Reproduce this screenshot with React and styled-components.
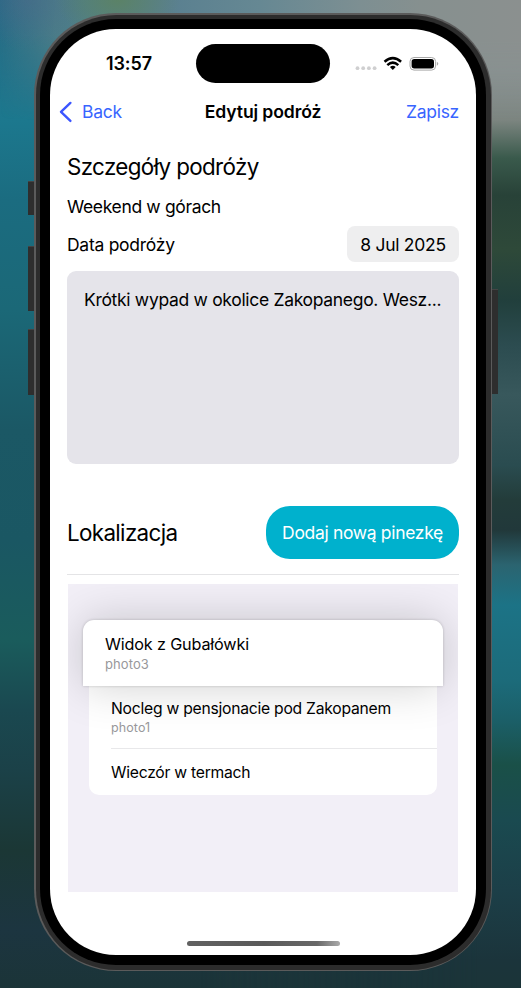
import React from "react";
import styled, { createGlobalStyle } from "styled-components";

const GlobalStyle = createGlobalStyle`
  * { box-sizing: border-box; }
  html, body { margin: 0; padding: 0; overflow: hidden; }
  body { font-family: Inter, "Liberation Sans", sans-serif; color: #000; }
  h1, h2, p { margin: 0; padding: 0; font-weight: 400; }
  button { font: inherit; border: 0; background: none; padding: 0; margin: 0; }
`;

/* Blurred wallpaper: a left tone, a right tone faded in over it, and a lighter top edge. */
const Wallpaper = styled.div`
  position: relative;
  isolation: isolate;
  width: 521px;
  height: 988px;
  padding: 13px 0 0 34px;
  background: linear-gradient(to bottom, #276a86 0, #257088 50px, #1c788e 120px, #1b6c80 200px, #1b6877 310px,
    #1b5865 430px, #1a5763 540px, #1a5c5c 640px, #1a4850 710px, #1b4148 770px, #1b3735 850px, #1c3540 930px,
    #1b3438 988px);

  &::before,
  &::after {
    content: "";
    position: absolute;
    inset: 0;
    z-index: -1;
  }

  &::before {
    background: linear-gradient(to bottom, #8b908f 0, #879292 70px, #7c8580 120px, #3a5a4c 158px, #284238 195px,
      #2e4939 250px, #213f3c 300px, #2c4c50 345px, #38585c 395px, #2a4c50 465px, #233c3a 500px, #21383a 530px,
      #2b6470 565px, #1c7386 605px, #1c6b7a 680px, #1b5f68 720px, #1a5048 765px, #1a4a50 820px, #1c3f48 890px,
      #1b343b 960px, #1b3438 988px);
    mask-image: linear-gradient(to right, transparent 200px, #000 480px);
  }

  &::after {
    background:
      radial-gradient(ellipse 62px 40px at 118px 0, rgba(93, 131, 91, 0.75), transparent),
      radial-gradient(ellipse 60px 50px at 28px 0, rgba(78, 104, 138, 0.5), transparent),
      linear-gradient(to right, rgba(48, 101, 127, 0) 0, #4a7d88 55px, #55808a 115px, #5a8090 170px, #668893 260px,
        #7d8f92 360px, #86908f 420px, #8b908f 521px);
    mask-image: linear-gradient(to bottom, #000 35px, transparent 120px);
  }
`;

const Phone = styled.div`
  position: relative;
  width: 458px;
  height: 958px;
  padding: 1.5px;
  border-radius: 82px;
  background: #5b5b5b;
`;

const Band = styled.div`
  height: 100%;
  padding: 4.5px;
  border-radius: 80.5px;
  background: #2c2c2c;
`;

const Bezel = styled.div`
  height: 100%;
  padding: 10px;
  border-radius: 76px;
  background: #000;
`;

const Screen = styled.main`
  height: 100%;
  display: flex;
  flex-direction: column;
  overflow: hidden;
  border-radius: 66px;
  background: #fff;
`;

/* Hardware keys sit on the outside edge of the phone frame. */
const SideKey = styled.span`
  position: absolute;
  ${(p) => p.$side}: -6px;
  top: ${(p) => p.$top}px;
  width: 6px;
  height: ${(p) => p.$height}px;
  background: #2e2e2e;
  border-top: 1px solid #444;
`;

const StatusBar = styled.header`
  display: grid;
  grid-template-columns: 146px 134px 1fr;
  align-items: center;
  height: 54px;
  padding-top: 15px;
`;

const Clock = styled.time`
  padding-left: 56px;
  font-size: 18px;
  font-weight: 600;
  line-height: 22px;
  letter-spacing: -0.1px;
`;

const Island = styled.div`
  height: 39px;
  border-radius: 20px;
  background: #000;
`;

const StatusIcons = styled.div`
  display: flex;
  padding-left: 25px;
`;

const NavBar = styled.nav`
  display: grid;
  grid-template-columns: 120px 1fr 120px;
  align-items: center;
  height: 44px;
  margin-top: 7px;
  padding: 0 17px 0 9px;
  font-size: 17.5px;
  line-height: 24px;
`;

const NavButton = styled.button`
  display: flex;
  align-items: center;
  justify-self: ${(p) => p.$align};
  gap: 9px;
  color: #3865ff;
  white-space: nowrap;
  letter-spacing: -0.28px;
`;

const NavTitle = styled.h1`
  justify-self: center;
  margin-left: 8px;
  font-size: 17.6px;
  font-weight: 600;
  white-space: nowrap;
  letter-spacing: -0.12px;
`;

const Content = styled.section`
  display: flex;
  flex-direction: column;
  padding: 18px 17px 0;
`;

const SectionTitle = styled.h2`
  font-size: 22.4px;
  line-height: 30px;
  white-space: nowrap;
  letter-spacing: ${(p) => p.$track}px;
`;

const FieldText = styled.p`
  font-size: 17.5px;
  line-height: 24px;
  white-space: nowrap;
  letter-spacing: ${(p) => p.$track}px;
`;

const TripName = styled(FieldText)`
  margin-top: 13px;
`;

const DateRow = styled.div`
  display: flex;
  align-items: center;
  justify-content: space-between;
  height: 36px;
  margin-top: 7px;
`;

const DateLabel = styled(FieldText)`
  padding-top: 1px;
`;

const DateChip = styled.button`
  width: 112px;
  height: 36px;
  border-radius: 8px;
  background: #eeeeef;
  font-size: 17.5px;
  letter-spacing: -0.27px;
`;

const Description = styled.div`
  height: 193px;
  margin-top: 9px;
  padding: 17px;
  border-radius: 9px;
  background: #e5e4ea;
`;

const LocationHeader = styled.div`
  display: flex;
  align-items: center;
  justify-content: space-between;
  height: 111px;
  padding-top: 27px;
  border-bottom: 1px solid #e4e4e6;
`;

const AddButton = styled.button`
  width: 193px;
  height: 53px;
  border-radius: 24px;
  background: #00b1cd;
  color: #fff;
  font-size: 17.5px;
  white-space: nowrap;
  letter-spacing: -0.33px;
`;

const PinArea = styled.div`
  height: 308px;
  margin: 9px 1px 0;
  padding: 36px 15px 0;
  overflow: hidden;
  background: #f2eff7;
`;

const PinRow = styled.div`
  display: flex;
  flex-direction: column;
`;

const LiftedRow = styled(PinRow)`
  position: relative;
  z-index: 1;
  height: 66px;
  padding: 12px 0 0 22px;
  border-radius: 11px 11px 0 0;
  background: #fff;
  box-shadow: 0 0 3px rgba(0, 0, 0, 0.2), 0 0 46px rgba(0, 0, 0, 0.19);
`;

const PinCard = styled.div`
  height: 109px;
  margin: 0 6px;
  padding: 11px 0 0 22px;
  border-radius: 0 0 10px 10px;
  background: #fff;
`;

const FirstRow = styled(PinRow)`
  height: 52px;
  border-bottom: 1px solid #e8e8ea;
`;

const LastRow = styled(PinRow)`
  height: 48px;
  justify-content: center;
`;

const PinTitle = styled.p`
  font-size: ${(p) => p.$size}px;
  line-height: ${(p) => p.$leading}px;
  white-space: nowrap;
  letter-spacing: ${(p) => p.$track}px;
`;

const PinPhoto = styled.p`
  font-size: ${(p) => p.$size}px;
  line-height: 16px;
  color: #98989b;
  letter-spacing: 0.1px;
`;

const HomeIndicator = styled.div`
  align-self: center;
  width: 153px;
  height: 5px;
  margin: auto 0 9px;
  border-radius: 3px;
  background: linear-gradient(to right, #616161, #5a5a5a 50%, #686868 85%, #aaa 100%);
`;

const CellularDots = () => (
  <svg width="22" height="22" viewBox="0 0 22 22" fill="#cfcfd0">
    <circle cx="2.5" cy="15.2" r="1.9" />
    <circle cx="8.2" cy="15.2" r="1.9" />
    <circle cx="13.9" cy="15.2" r="1.9" />
    <circle cx="19.6" cy="15.2" r="1.9" />
  </svg>
);

const WifiGlyph = () => (
  <svg width="26" height="22" viewBox="0 0 26 22" fill="none" stroke="#000">
    <path d="M7.5 8.7Q15.8 1.5 24.1 8.7" strokeWidth="2.5" />
    <path d="M10.3 12.1Q15.8 7.2 21.3 12.1" strokeWidth="2.5" />
    <path d="M15.8 17L12.9 14Q15.8 11.5 18.7 14Z" fill="#000" stroke="none" />
  </svg>
);

const BatteryGlyph = () => (
  <svg width="38" height="22" viewBox="0 0 38 22">
    <rect x="7" y="4.5" width="25.6" height="12.6" rx="4" fill="none" stroke="#a8a8a8" />
    <rect x="8.6" y="6.1" width="22.4" height="9.4" rx="2.7" fill="#000" />
    <path d="M33.9 8.8Q36.7 10.8 33.9 12.8Z" fill="#a8a8a8" />
  </svg>
);

const BackChevron = () => (
  <svg
    width="14"
    height="22"
    viewBox="0 0 14 22"
    fill="none"
    stroke="#3c56ff"
    strokeWidth="2.4"
    strokeLinecap="round"
    strokeLinejoin="round"
  >
    <path d="M11.4 1.9L2 10.9L11.4 19.9" />
  </svg>
);

export default function App() {
  return (
    <>
      <GlobalStyle />
      <Wallpaper>
        <Phone>
          <SideKey $side="left" $top={168} $height={34} />
          <SideKey $side="left" $top={233} $height={65} />
          <SideKey $side="left" $top={316} $height={66} />
          <SideKey $side="right" $top={276} $height={105} />
          <Band>
            <Bezel>
              <Screen>
                <StatusBar>
                  <Clock>13:57</Clock>
                  <Island />
                  <StatusIcons>
                    <CellularDots />
                    <WifiGlyph />
                    <BatteryGlyph />
                  </StatusIcons>
                </StatusBar>
                <NavBar>
                  <NavButton $align="start">
                    <BackChevron />
                    Back
                  </NavButton>
                  <NavTitle>Edytuj podróż</NavTitle>
                  <NavButton $align="end">Zapisz</NavButton>
                </NavBar>
                <Content>
                  <SectionTitle $track={-0.64}>Szczegóły podróży</SectionTitle>
                  <TripName $track={-0.35}>Weekend w górach</TripName>
                  <DateRow>
                    <DateLabel $track={-0.27}>Data podróży</DateLabel>
                    <DateChip>8 Jul 2025</DateChip>
                  </DateRow>
                  <Description>
                    <FieldText $track={-0.31}>Krótki wypad w okolice Zakopanego. Wesz...</FieldText>
                  </Description>
                  <LocationHeader>
                    <SectionTitle $track={-0.65}>Lokalizacja</SectionTitle>
                    <AddButton>Dodaj nową pinezkę</AddButton>
                  </LocationHeader>
                  <PinArea>
                    <LiftedRow>
                      <PinTitle $size={16.2} $leading={24} $track={-0.16}>Widok z Gubałówki</PinTitle>
                      <PinPhoto $size={13}>photo3</PinPhoto>
                    </LiftedRow>
                    <PinCard>
                      <FirstRow>
                        <PinTitle $size={15.7} $leading={23} $track={-0.25}>
                          Nocleg w pensjonacie pod Zakopanem
                        </PinTitle>
                        <PinPhoto $size={12.5}>photo1</PinPhoto>
                      </FirstRow>
                      <LastRow>
                        <PinTitle $size={15.7} $leading={24} $track={-0.25}>Wieczór w termach</PinTitle>
                      </LastRow>
                    </PinCard>
                  </PinArea>
                </Content>
                <HomeIndicator />
              </Screen>
            </Bezel>
          </Band>
        </Phone>
      </Wallpaper>
    </>
  );
}
